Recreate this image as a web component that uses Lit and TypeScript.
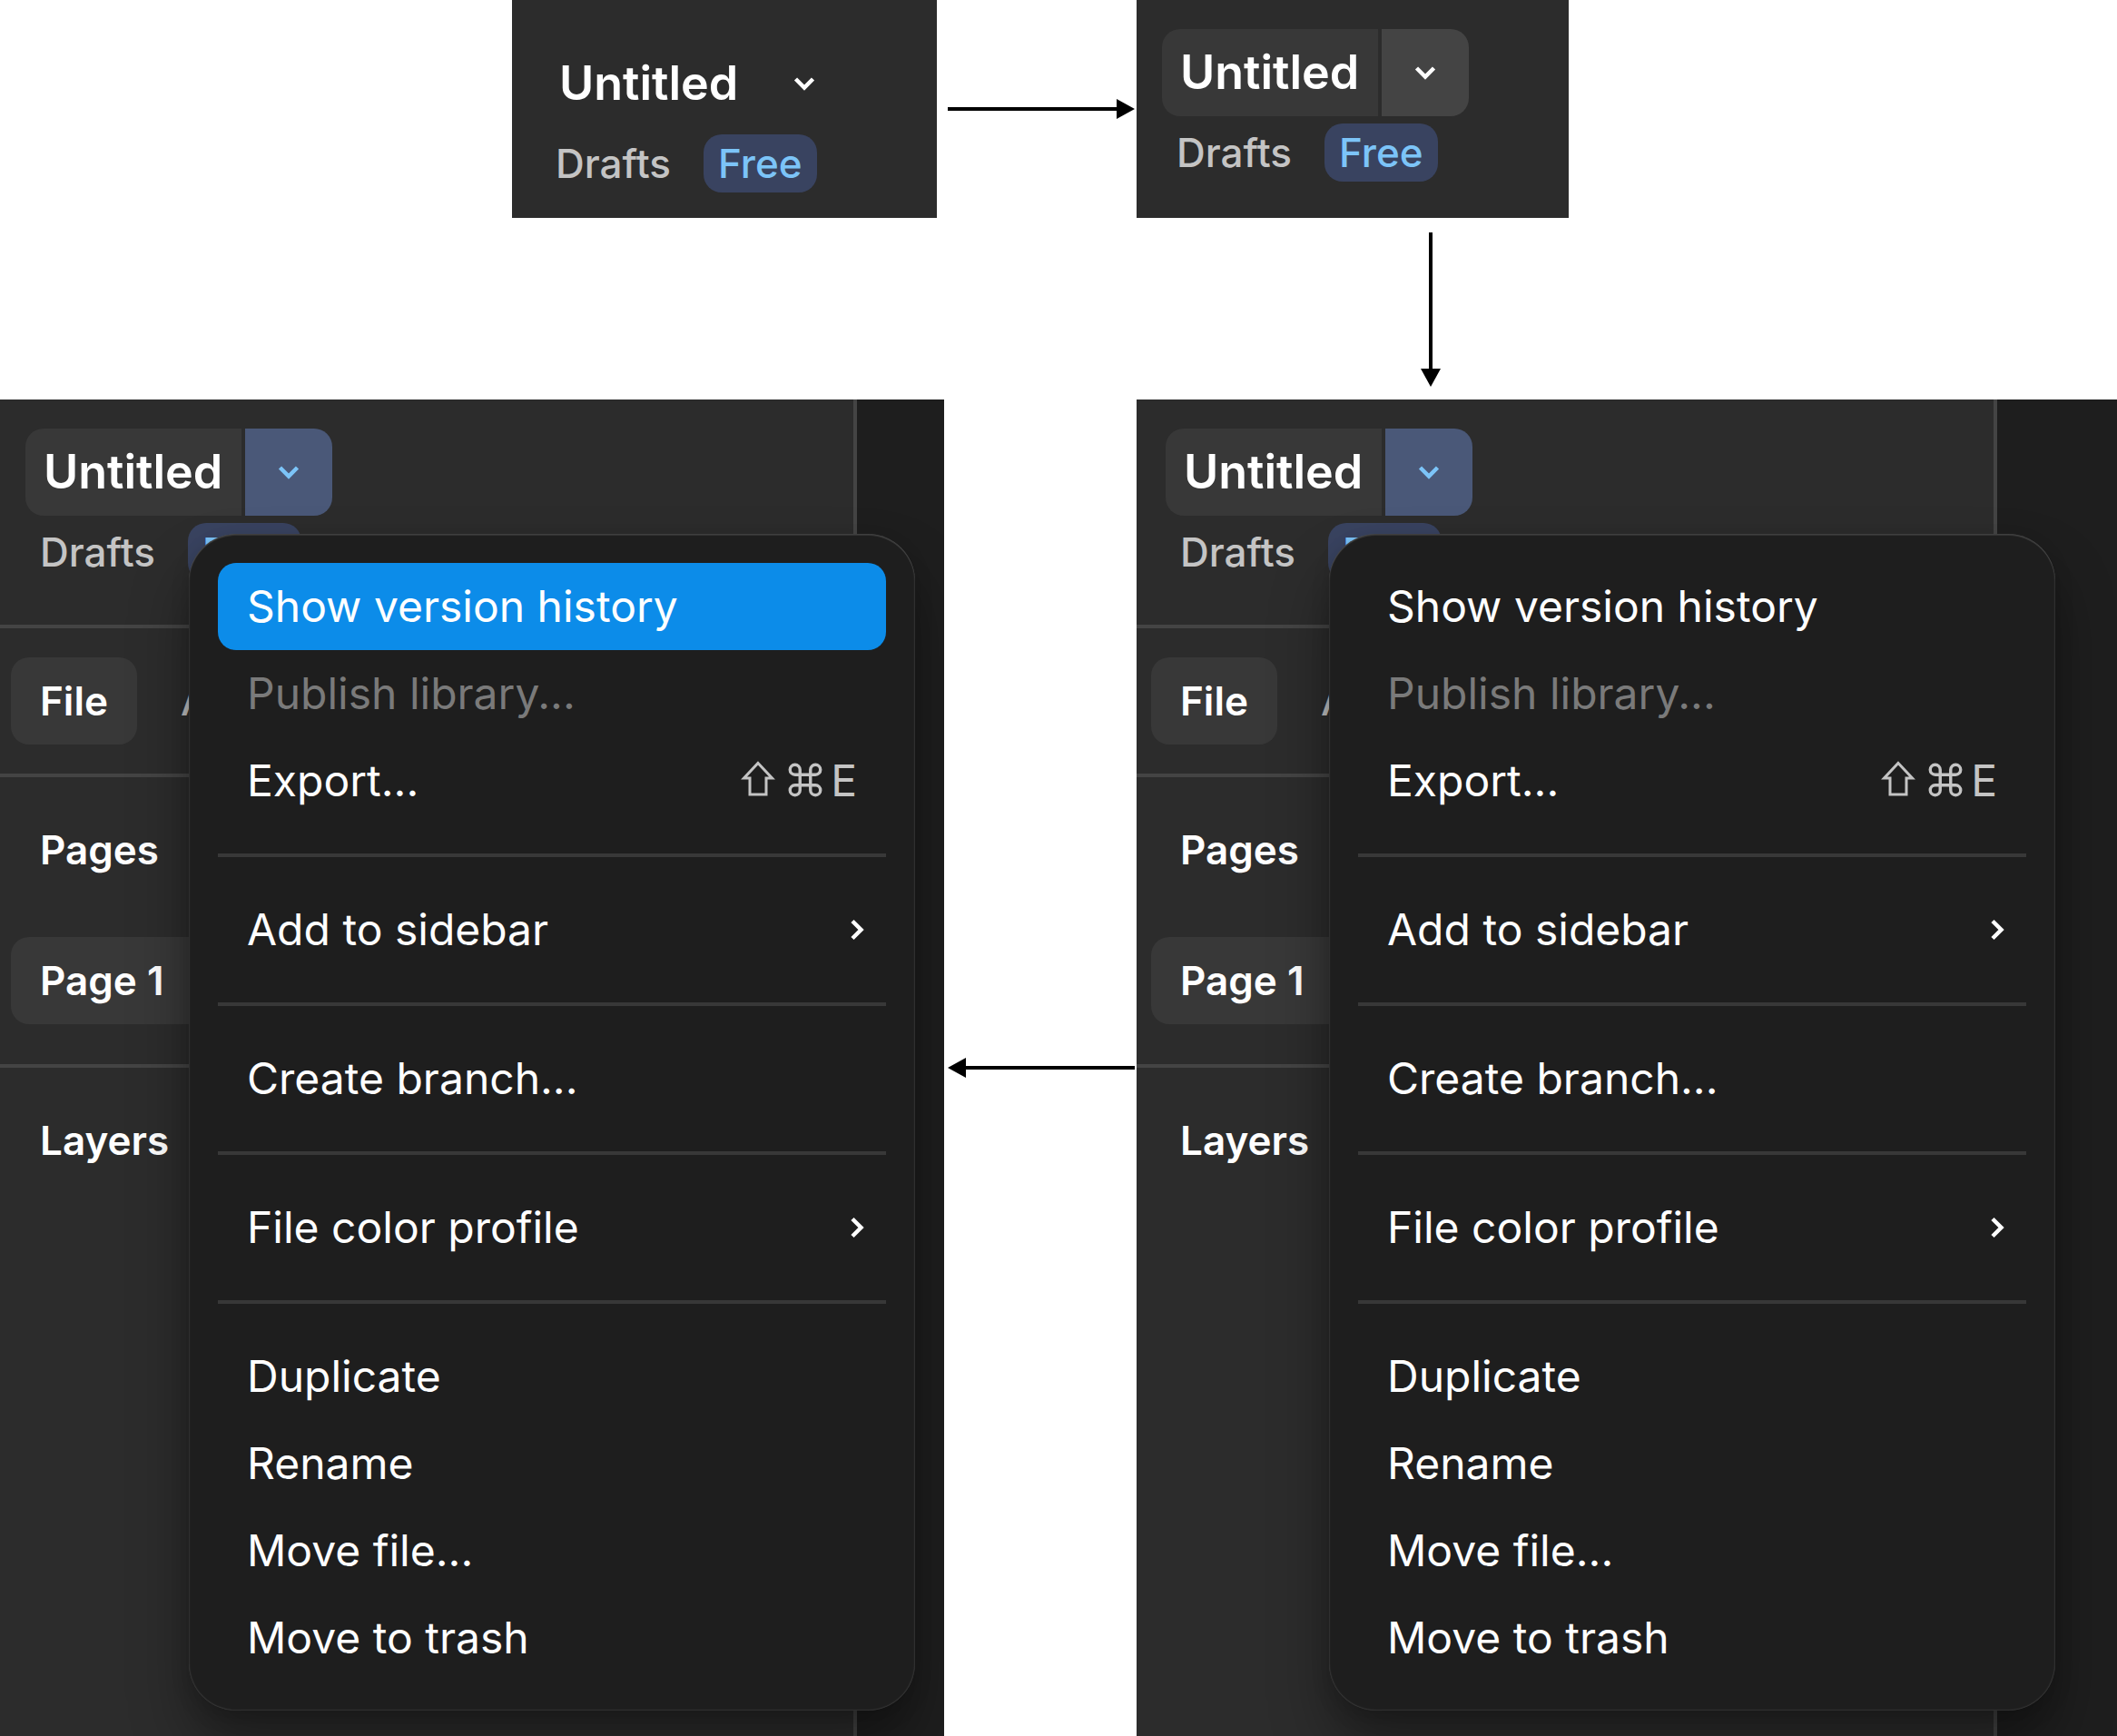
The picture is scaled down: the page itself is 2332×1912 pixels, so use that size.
import { LitElement, html, css, nothing } from "lit";
import { customElement, property } from "lit/decorators.js";

type MenuEntry = {
  label: string;
  disabled?: boolean;
  shortcut?: boolean;
  submenu?: boolean;
};

const MENU: MenuEntry[][] = [
  [
    { label: "Show version history" },
    { label: "Publish library...", disabled: true },
    { label: "Export...", shortcut: true },
  ],
  [{ label: "Add to sidebar", submenu: true }],
  [{ label: "Create branch..." }],
  [{ label: "File color profile", submenu: true }],
  [
    { label: "Duplicate" },
    { label: "Rename" },
    { label: "Move file..." },
    { label: "Move to trash" },
  ],
];

const reset = css`
  * {
    box-sizing: border-box;
  }
  button {
    appearance: none;
    margin: 0;
    padding: 0;
    border: 0;
    background: none;
    color: inherit;
    font: inherit;
    text-align: left;
    white-space: nowrap;
  }
`;

/** File name, its drop-down trigger, and the location line below. */
@customElement("file-header")
export class FileHeader extends LitElement {
  @property() state: "idle" | "hover" | "open" = "idle";

  static styles = [
    reset,
    css`
      :host {
        display: flex;
        flex-direction: column;
        align-items: flex-start;
        gap: 8px;
        padding: 32px 32px 48px;
      }
      .title {
        display: flex;
        gap: 4px;
      }
      .name,
      .toggle {
        height: 96px;
      }
      .name {
        min-width: 238px;
        padding: 0 20px;
        border-radius: 20px 0 0 20px;
        font-size: 52px;
        font-weight: 600;
        line-height: 96px;
      }
      .toggle {
        display: grid;
        place-items: center;
        width: 96px;
        border-radius: 0 20px 20px 0;
      }
      .hover .name,
      .open .name {
        background: #383838;
      }
      .hover .toggle {
        background: #444444;
      }
      .open .toggle {
        background: #4a5878;
        color: #7cc4f8;
      }
      .place {
        display: flex;
        align-items: center;
        gap: 36px;
        padding-left: 16px;
        font-size: 44px;
        font-weight: 500;
        line-height: 64px;
        color: #c4c4c4;
      }
      .badge {
        padding: 0 16px;
        border-radius: 20px;
        background: #394360;
        color: #7cc4f8;
      }
    `,
  ];

  render() {
    return html`
      <div class="title ${this.state}">
        <button class="name" type="button">Untitled</button>
        <button class="toggle" type="button" aria-label="File options">
          <svg width="32" height="32" viewBox="0 0 32 32" fill="none" aria-hidden="true">
            <path d="M6.5 11 L16 20.5 L25.5 11" stroke="currentColor" stroke-width="4.5" />
          </svg>
        </button>
      </div>
      <div class="place"><span>Drafts</span><span class="badge">Free</span></div>
    `;
  }
}

@customElement("file-menu")
export class FileMenu extends LitElement {
  @property() active = "";

  static styles = [
    reset,
    css`
      :host {
        display: block;
        padding: 32px;
        border-radius: 52px;
        background: #1e1e1e;
        box-shadow:
          inset 0 2px 0 rgba(255, 255, 255, 0.08),
          inset 0 0 2px rgba(255, 255, 255, 0.3),
          0 8px 20px rgba(0, 0, 0, 0.15),
          0 40px 64px rgba(0, 0, 0, 0.35);
      }
      .group + .group {
        margin-top: 32px;
        padding-top: 32px;
        border-top: 4px solid #383838;
      }
      .item {
        display: flex;
        align-items: center;
        justify-content: space-between;
        width: 100%;
        height: 96px;
        padding: 0 32px;
        border-radius: 20px;
        color: #ffffff;
        font-size: 48px;
      }
      .label,
      .key {
        padding-bottom: 2px;
      }
      .item:disabled {
        color: #7a7a7a;
      }
      .active {
        background: #0c8ce9;
      }
      .keys {
        display: flex;
        align-items: center;
        gap: 8px;
        color: #c4c4c4;
      }
      .more {
        margin-right: -16px;
      }
    `,
  ];

  private trailing(entry: MenuEntry) {
    if (entry.shortcut) {
      return html`<span class="keys">
        <svg width="48" height="44" viewBox="0 0 48 44" fill="none" aria-hidden="true">
          <path
            d="M24 2.5 L39.5 19 H33 V37 H15 V19 H8.5 Z"
            stroke="currentColor"
            stroke-width="3"
          />
        </svg>
        <svg width="40" height="44" viewBox="0 0 40 44" fill="none" aria-hidden="true">
          <path
            d="M14.25 15.25 V9.75 A5.5 5.5 0 1 0 8.75 15.25 H31.25 A5.5 5.5 0 1 0 25.75 9.75 V32.25 A5.5 5.5 0 1 0 31.25 26.75 H8.75 A5.5 5.5 0 1 0 14.25 32.25 Z"
            stroke="currentColor"
            stroke-width="3.4"
          />
        </svg>
        <span class="key">E</span>
      </span>`;
    }
    if (entry.submenu) {
      return html`<svg
        class="more"
        width="32"
        height="32"
        viewBox="0 0 32 32"
        fill="none"
        aria-hidden="true"
      >
        <path d="M11 6.5 L20.5 16 L11 25.5" stroke="currentColor" stroke-width="4.5" />
      </svg>`;
    }
    return nothing;
  }

  render() {
    return MENU.map(
      (group) => html`<div class="group">
        ${group.map(
          (entry) => html`<button
            type="button"
            class="item ${entry.label === this.active ? "active" : ""}"
            ?disabled=${entry.disabled}
          >
            <span class="label">${entry.label}</span>${this.trailing(entry)}
          </button>`,
        )}
      </div>`,
    );
  }
}

/** Editor sidebar with the file menu open over it. */
@customElement("editor-panel")
export class EditorPanel extends LitElement {
  @property() active = "";

  static styles = [
    reset,
    css`
      :host {
        display: block;
        position: relative;
        background: #1e1e1e;
        color: #ffffff;
        font-size: 44px;
        font-weight: 600;
      }
      .sidebar {
        width: 948px;
        height: 100%;
        border-right: 4px solid #444444;
        background: #2c2c2c;
      }
      .section {
        border-bottom: 4px solid #444444;
      }
      .tabs {
        display: flex;
        gap: 16px;
        padding: 32px 16px;
      }
      .tab {
        height: 96px;
        padding: 0 32px;
        border-radius: 20px;
        color: #c4c4c4;
        font-weight: 500;
      }
      .current {
        background: #383838;
        color: #ffffff;
        font-weight: 600;
      }
      .pages {
        padding: 0 16px 44px;
      }
      .layers {
        padding: 0 16px;
      }
      .heading {
        margin: 0;
        padding: 0 32px;
        font-size: 44px;
        font-weight: 600;
        line-height: 160px;
      }
      .pages .heading {
        margin-bottom: 16px;
      }
      .row {
        display: block;
        width: 100%;
        height: 96px;
        padding: 0 32px;
        border-radius: 20px;
      }
      file-menu {
        position: absolute;
        top: 148px;
        left: 212px;
        width: 800px;
        font-weight: 400;
      }
    `,
  ];

  render() {
    return html`
      <div class="sidebar">
        <file-header class="section" state="open"></file-header>
        <div class="section tabs">
          <button class="tab current" type="button">File</button>
          <button class="tab" type="button">Assets</button>
        </div>
        <div class="section pages">
          <h2 class="heading">Pages</h2>
          <button class="row current" type="button">Page 1</button>
        </div>
        <div class="layers"><h2 class="heading">Layers</h2></div>
      </div>
      <file-menu active=${this.active}></file-menu>
    `;
  }
}

@customElement("app-root")
export class AppRoot extends LitElement {
  static styles = [
    reset,
    css`
      :host {
        display: block;
        overflow: hidden;
        background: #ffffff;
        font-family: Inter, "Liberation Sans", sans-serif;
      }
      .board {
        display: grid;
        grid-template-columns: 1040fr 212px 1080fr;
        grid-template-rows: auto 200px auto;
      }
      .card {
        overflow: hidden;
        height: 240px;
        background: #2c2c2c;
        color: #ffffff;
      }
      .first {
        justify-self: end;
        width: 468px;
        margin-right: 8px;
        padding-top: 12px;
      }
      .second {
        width: 476px;
      }
      .cropped {
        margin-left: -4px;
      }
      .panel {
        overflow: hidden;
        height: 1472px;
      }
      .panel editor-panel {
        height: 100%;
      }
      .arrow {
        display: block;
      }
      .across {
        align-self: start;
        margin: 108px 0 0 4px;
      }
      .down {
        grid-column: 3;
        margin: 16px 0 0 312px;
      }
      .back {
        grid-row: 3;
        grid-column: 2;
        margin: 724px 0 0 4px;
      }
    `,
  ];

  render() {
    return html`
      <main class="board">
        <div class="card first"><file-header></file-header></div>
        <svg class="arrow across" width="208" height="24" viewBox="0 0 208 24" aria-hidden="true">
          <path d="M0 10 H186 V1 L206 12 L186 23 V14 H0 Z" />
        </svg>
        <div class="card second">
          <file-header class="cropped" state="hover"></file-header>
        </div>
        <svg class="arrow down" width="24" height="172" viewBox="0 0 24 172" aria-hidden="true">
          <path d="M10 0 V150 H1 L12 170 L23 150 H14 V0 Z" />
        </svg>
        <div class="panel">
          <editor-panel class="cropped" active="Show version history"></editor-panel>
        </div>
        <svg class="arrow back" width="208" height="24" viewBox="0 0 208 24" aria-hidden="true">
          <path d="M206 10 H20 V1 L0 12 L20 23 V14 H206 Z" />
        </svg>
        <div class="panel"><editor-panel></editor-panel></div>
      </main>
    `;
  }
}
